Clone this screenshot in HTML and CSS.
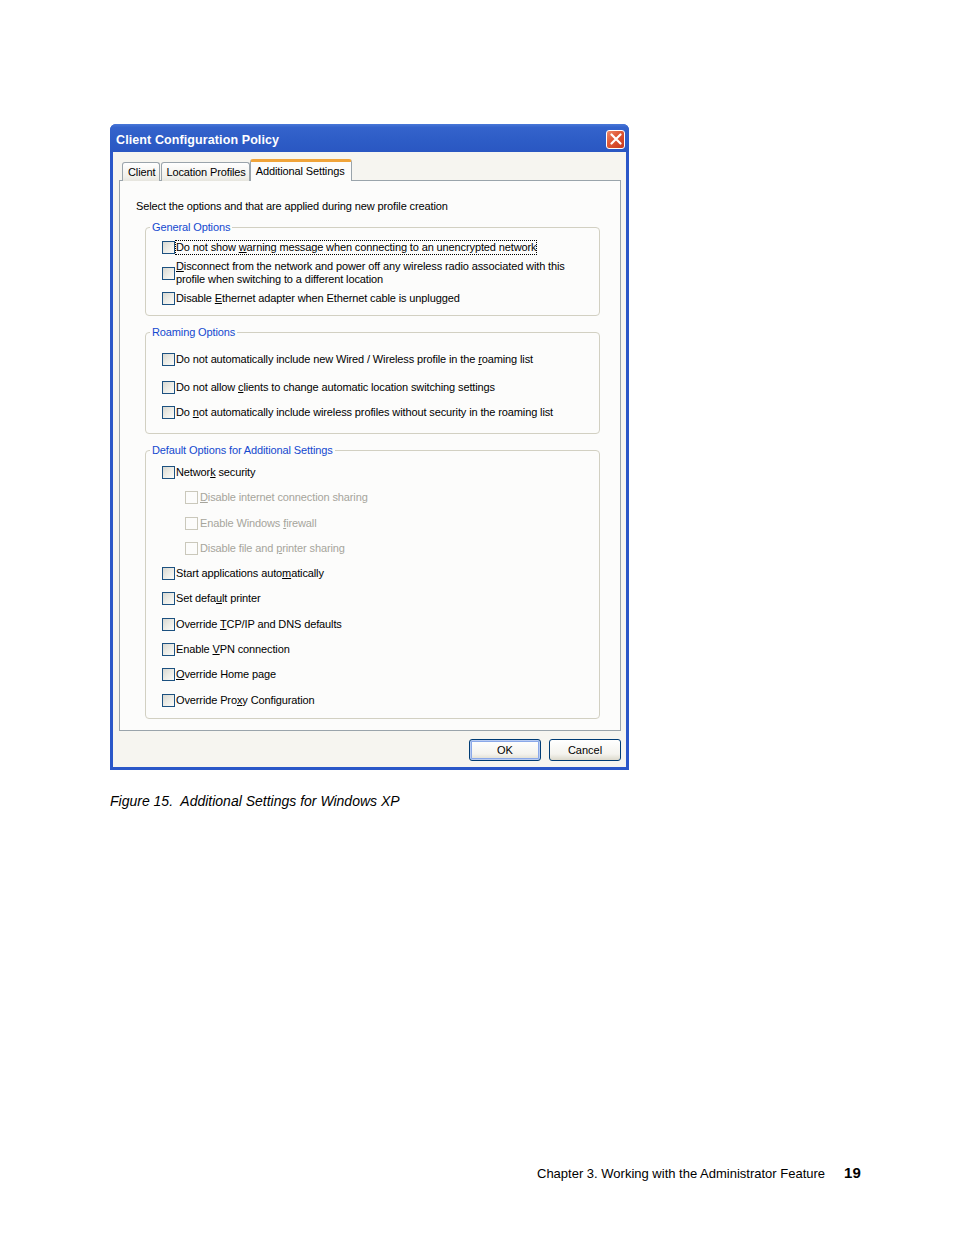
FILE: index.html
```html
<!DOCTYPE html>
<html>
<head>
<meta charset="utf-8">
<link rel="stylesheet" href="styles.css">
</head>
<body>
<div class="page">
  <div class="dialog">
    <div class="titlebar">
      <span class="title">Client Configuration Policy</span>
      <span class="close"><svg width="12" height="12" viewBox="0 0 12 12"><path d="M1.5 1.5 L10.5 10.5 M10.5 1.5 L1.5 10.5" stroke="#fff" stroke-width="2.2" stroke-linecap="round"/></svg></span>
    </div>
    <div class="dbody">
      <div class="tabs">
        <div class="tab">Client</div>
        <div class="tab">Location Profiles</div>
        <div class="tab active">Additional Settings</div>
      </div>
      <div class="panel">
        <p class="intro">Select the options and that are applied during new profile creation</p>

        <fieldset class="group g-general">
          <legend>General Options</legend>
          <div class="row"><span class="cb"></span><span class="lbl focus">Do not show <u>w</u>arning message when connecting to an unencrypted network</span></div>
          <div class="row two"><span class="cb"></span><span class="lbl"><u>D</u>isconnect from the network and power off any wireless radio associated with this<br>profile when switching to a different location</span></div>
          <div class="row"><span class="cb"></span><span class="lbl">Disable <u>E</u>thernet adapter when Ethernet cable is unplugged</span></div>
        </fieldset>

        <fieldset class="group g-roam">
          <legend>Roaming Options</legend>
          <div class="row"><span class="cb"></span><span class="lbl">Do not automatically include new Wired / Wireless profile in the <u>r</u>oaming list</span></div>
          <div class="row r2"><span class="cb"></span><span class="lbl">Do not allow <u>c</u>lients to change automatic location switching settings</span></div>
          <div class="row r3"><span class="cb"></span><span class="lbl">Do <u>n</u>ot automatically include wireless profiles without security in the roaming list</span></div>
        </fieldset>

        <fieldset class="group g-default">
          <legend>Default Options for Additional Settings</legend>
          <div class="row"><span class="cb"></span><span class="lbl">Networ<u>k</u> security</span></div>
          <div class="row sub"><span class="cb dis"></span><span class="lbl dis"><u>D</u>isable internet connection sharing</span></div>
          <div class="row sub"><span class="cb dis"></span><span class="lbl dis">Enable Windows <u>f</u>irewall</span></div>
          <div class="row sub"><span class="cb dis"></span><span class="lbl dis">Disable file and <u>p</u>rinter sharing</span></div>
          <div class="row"><span class="cb"></span><span class="lbl">Start applications auto<u>m</u>atically</span></div>
          <div class="row"><span class="cb"></span><span class="lbl">Set defa<u>u</u>lt printer</span></div>
          <div class="row"><span class="cb"></span><span class="lbl">Override <u>T</u>CP/IP and DNS defaults</span></div>
          <div class="row"><span class="cb"></span><span class="lbl">Enable <u>V</u>PN connection</span></div>
          <div class="row"><span class="cb"></span><span class="lbl"><u>O</u>verride Home page</span></div>
          <div class="row"><span class="cb"></span><span class="lbl">Override Pro<u>x</u>y Configuration</span></div>
        </fieldset>
      </div>
      <div class="buttons">
        <button class="btn default">OK</button>
        <button class="btn">Cancel</button>
      </div>
    </div>
  </div>
  <p class="caption">Figure 15.&nbsp; Additional Settings for Windows XP</p>
  <footer class="footer"><span class="chapter">Chapter 3. Working with the Administrator Feature</span><span class="pnum">19</span></footer>
</div>
</body>
</html>
```
FILE: styles.css
```css
html, body { margin: 0; padding: 0; background: #fff; }
.page {
  width: 954px; height: 1235px;
  display: flex; flex-direction: column;
  font-family: "Liberation Sans", Arial, sans-serif;
}
.dialog {
  margin: 124px 0 0 110px;
  width: 519px;
  box-sizing: border-box;
  background: #2b57c8;
  border-radius: 6px 6px 0 0;
  padding: 0 3px 3px 3px;
}
.titlebar {
  height: 28px;
  margin: 0 -3px;
  padding: 3px 4px 0 6px;
  box-sizing: border-box;
  display: flex; align-items: center; justify-content: space-between;
  background: linear-gradient(#4a78d8 0%, #3463cc 12%, #2d5cc6 60%, #2a57c2 100%);
  border-radius: 6px 6px 0 0;
}
.title {
  color: #fff; font-weight: bold;
  font-family: "Liberation Sans", Arial, sans-serif; font-size: 12.5px;
  letter-spacing: 0.1px;
}
.close {
  width: 19px; height: 19px; box-sizing: border-box;
  border: 1px solid #fff; border-radius: 3px;
  background: linear-gradient(135deg, #f08a6a 0%, #e05a38 40%, #c8381c 100%);
  display: flex; align-items: center; justify-content: center;
  margin-top: -1px;
}
.dbody {
  background: #f6f5f0;
  padding: 7px 5px 6px 6px;
  font-size: 11px;
  letter-spacing: -0.12px;
  color: #000;
}
.tabs {
  display: flex; align-items: flex-end;
  padding-left: 3px;
  height: 22px;
  margin-bottom: -1px;
}
.tab {
  height: 19px; box-sizing: border-box;
  padding: 0 4px 0 5px;
  line-height: 19px;
  border: 1px solid #9aa4ab; border-bottom: none;
  border-radius: 3px 3px 0 0;
  background: linear-gradient(#ffffff, #f0efe9 80%, #e6e5de);
  margin-right: 1px;
  font-size: 11px;
}
.tab:nth-child(2) { padding: 0 3px 0 4px; }
.tab.active {
  height: 22px; line-height: 18px;
  background: #fcfcfb;
  border-top: 3px solid #f0a43a;
  margin-right: 0; margin-left: -1px;
  padding: 0 6px 0 5px;
  position: relative; z-index: 1;
}
.panel {
  border: 1px solid #9aa4ab;
  background: #fcfcfb;
  padding: 0 0 12px 0;
  height: 551px; box-sizing: border-box;
}
.intro { margin: 19px 0 8px 16px; line-height: 13px; }
.group {
  margin: 0 20px 0 25px;
  border: 1px solid #d2d0c2;
  border-radius: 4px;
  padding: 7px 0 10px 4px;
  min-width: 0;
}
.group legend {
  color: #1449cf;
  padding: 0 2px;
  margin-left: 0;
  line-height: 13px;
}
.g-roam { margin-top: 10px; padding-top: 14px; padding-bottom: 14px; }
.g-default { margin-top: 10px; padding-top: 9px; padding-bottom: 11px; display: flex; flex-direction: column; gap: 12.3px; }
.g-general { display: flex; flex-direction: column; gap: 6px; }
.g-roam .r2 { margin-top: 15px; }
.g-roam .r3 { margin-top: 12px; }
.row {
  display: flex; align-items: center;
  line-height: 13px;
  white-space: nowrap;
  padding-left: 12px;
}
.row.sub { padding-left: 35px; }
.cb {
  width: 13px; height: 13px; box-sizing: border-box; flex: none;
  border: 1px solid #1c5180;
  background: linear-gradient(135deg, #d8d8d2 0%, #ecece6 50%, #fbfbf9 100%);
  margin-right: 1px;
}
.cb.dis { border-color: #cac8bb; background: #fcfcfb; margin-right: 2px; }
.lbl { color: #000; }
.lbl.dis { color: #a6a59c; }
.lbl.focus { outline: 1px dotted #000; outline-offset: 0; }
u { text-decoration: underline; text-underline-offset: 1px; }
.buttons {
  display: flex; justify-content: flex-end; gap: 8px;
  margin-top: 8px;
}
.btn {
  width: 72px; height: 22px; box-sizing: border-box;
  font: 11px "Liberation Sans", Arial, sans-serif; color: #000;
  border: 1px solid #003c74; border-radius: 3px;
  background: linear-gradient(#ffffff, #f4f3ee 70%, #dcd9cc);
  padding: 0;
}
.btn.default { box-shadow: inset 0 0 0 1px #b8cbf2, inset 0 0 0 2px #8aa8e8; }
.caption {
  margin: 23px 0 0 110px;
  font-style: italic; font-size: 14px; line-height: 16px;
  color: #000;
}
.footer {
  margin-top: auto; margin-bottom: 54px;
  display: flex; align-items: baseline;
  padding-left: 537px;
}
.chapter { font-size: 13px; color: #000; }
.pnum { font-size: 15px; font-weight: bold; margin-left: 19px; }
```
